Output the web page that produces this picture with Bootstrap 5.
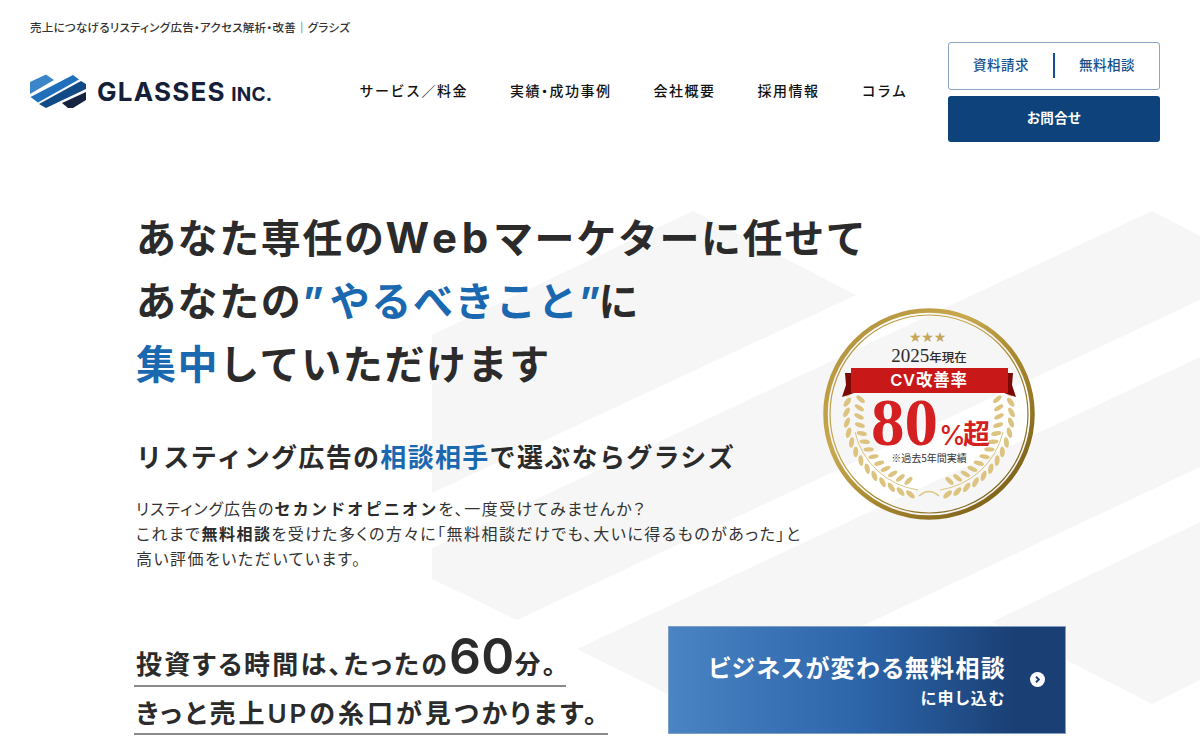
<!DOCTYPE html>
<html lang="ja">
<head>
<meta charset="utf-8">
<title>グラシズ</title>
<link href="https://cdn.jsdelivr.net/npm/bootstrap@5.3.0/dist/css/bootstrap.min.css" rel="stylesheet">
<style>
html,body{height:100%;}
body{font-family:"Inter","Noto Sans CJK JP",sans-serif;color:#2b2b2b;background:#fff;font-feature-settings:"palt";overflow:hidden;}
.page-wrap{height:750px;width:1200px;}
.bg-shape{left:0;top:0;width:1200px;height:750px;z-index:0;}
.site-head,.hero-main{z-index:1;}
.site-head{padding:0 40px 0 30px;height:142px;}
.tagline{margin:20px 0 0;font-size:11.5px;line-height:16px;font-weight:500;color:#333;white-space:nowrap;letter-spacing:.27px;}
.logo-row{margin-top:38px;height:34px;}
.logo-mark{width:56px;height:34px;flex:none;}
.logo-text{margin-left:11px;font-weight:700;font-size:26px;letter-spacing:1.25px;color:#14203a;line-height:34px;white-space:nowrap;padding-top:4px;}
.logo-text span{font-size:19px;letter-spacing:.2px;margin-left:-2px;}
.gnav{gap:42px;margin:0 40.5px 0 auto;list-style:none;padding:0;}
.gnav a{color:#111;text-decoration:none;font-size:14px;font-weight:500;letter-spacing:1.5px;white-space:nowrap;line-height:34px;display:block;font-feature-settings:normal;}
.mid-dot{font-feature-settings:"palt";}
.head-btns{width:212px;flex:none;margin-top:42px;gap:6px;}
.btn-pair{height:48px;border:1px solid #8aa4c6;border-radius:3px;background:#fff;padding-bottom:2px;}
.btn-pair a{color:#15508c;font-size:13.5px;font-weight:500;text-decoration:none;flex:1 1 0;text-align:center;letter-spacing:.5px;}
.btn-pair i{display:block;width:2px;height:25px;background:#15508c;flex:none;}
.btn-ask{height:46px;background:#0d437a;color:#fff;font-size:13.5px;font-weight:700;text-decoration:none;border-radius:3px;letter-spacing:.4px;padding-bottom:2px;}
.hero-main{padding-left:136px;}
.hero-title{margin:65px 0 0;font-size:40px;line-height:63px;font-weight:700;letter-spacing:1.6px;color:#2b2b2b;white-space:nowrap;font-feature-settings:normal;}
.latin-wide{font-size:42px;letter-spacing:4.8px;line-height:0;}
.quote-mark{letter-spacing:6px;}
.quote-mark.end{letter-spacing:-2px;}
.hl{color:#1a68b0;}
.hero-sub{margin:42px 0 0;font-size:26px;line-height:40px;font-weight:700;letter-spacing:1.32px;white-space:nowrap;font-feature-settings:normal;}
.hero-text{margin:19px 0 0;font-size:16px;line-height:25px;letter-spacing:1.5px;color:#333;white-space:nowrap;}
.hero-text b{font-weight:700;color:#2b2b2b;}
.hero-text .tight{letter-spacing:1px;}
.hero-text b.loose{font-feature-settings:normal;letter-spacing:2.2px;}
.cta-row{margin-top:54px;}
.lead-col{width:534px;margin-left:-2px;flex:none;}
.lead-line{width:fit-content;padding:0 8px 0 2px;border-bottom:2px solid #8a8a8a;font-size:26px;font-weight:600;letter-spacing:3px;white-space:nowrap;height:48px;line-height:54px;}
.lead-line.first{height:61px;line-height:78px;letter-spacing:2.2px;}
.lead-line b{font-size:50px;font-weight:600;line-height:1;letter-spacing:.2px;}
.cta-box{width:398px;height:108px;background:linear-gradient(90deg,#4a84c4 0%,#2c64a8 50%,#1a3f74 88%);color:#fff;text-decoration:none;padding:2px 59px 0 0;border:1px solid #7f9fc6;}
.cta-l1{font-size:24px;line-height:32px;font-weight:700;letter-spacing:1.3px;white-space:nowrap;}
.cta-l2{font-size:16px;line-height:24px;font-weight:700;letter-spacing:1.6px;margin-top:1px;}
.cta-arrow{right:20px;top:45px;width:15px;height:15px;}
.award{left:822px;top:307px;width:214px;height:214px;z-index:2;}
</style>
</head>
<body>
<div class="page-wrap position-relative overflow-hidden">
  <svg class="bg-shape position-absolute" viewBox="0 0 1200 750" aria-hidden="true">
    <g fill="#f6f6f6">
      <polygon points="432,335 693,211 856,295 432,493"/>
      <polygon points="432,548 1152,211 1200,236 1200,300 517,620 432,579"/>
      <polygon points="577,649 1200,357 1200,467 692,706"/>
      <polygon points="992,622 1200,522 1200,680 1152,704"/>
    </g>
  </svg>

  <header class="site-head d-flex position-relative">
    <div class="flex-grow-1">
      <p class="tagline">売上につなげるリスティング広告・アクセス解析・改善｜グラシズ</p>
      <div class="logo-row d-flex align-items-center">
        <svg class="logo-mark" viewBox="30 74 56 34" aria-hidden="true">
          <polygon fill="#3c85c8" points="30,82 46,74.5 54,80 30,94"/>
          <polygon fill="#1f6fbb" points="30.5,97 73,75 79,79.5 38,102.5"/>
          <polygon fill="#124a87" points="39,104 81,81 86,84 86,89 46,108"/>
          <polygon fill="#14233f" points="62,103 86,92 86,100 73,108 68,108"/>
        </svg>
        <div class="logo-text">GLASSES <span>INC.</span></div>
        <ul class="gnav d-flex">
          <li><a href="#">サービス／料金</a></li>
          <li><a href="#">実績<span class="mid-dot">・</span>成功事例</a></li>
          <li><a href="#">会社概要</a></li>
          <li><a href="#">採用情報</a></li>
          <li><a href="#">コラム</a></li>
        </ul>
      </div>
    </div>
    <div class="head-btns d-flex flex-column">
      <div class="btn-pair d-flex align-items-center">
        <a href="#">資料請求</a><i></i><a href="#">無料相談</a>
      </div>
      <a class="btn-ask d-flex align-items-center justify-content-center" href="#">お問合せ</a>
    </div>
  </header>

  <main class="hero-main position-relative">
    <h1 class="hero-title">あなた専任の<span class="latin-wide">Web</span>マーケターに任せて<br>あなたの<span class="hl"><span class="quote-mark">”</span>やるべきこと<span class="quote-mark end">”</span></span>に<br><span class="hl">集中</span>していただけます</h1>
    <h2 class="hero-sub">リスティング広告の<span class="hl">相談相手</span>で選ぶならグラシズ</h2>
    <p class="hero-text"><span class="tight">リスティング広告の</span><b class="loose">セカンドオピニオン</b>を、一度受けてみませんか？<br>これまで<b>無料相談</b>を受けた多くの方々に「無料相談だけでも、大いに得るものがあった」と<br>高い評価をいただいています。</p>
    <div class="cta-row d-flex">
      <div class="lead-col">
        <div class="lead-line first">投資する時間は、たったの<b>60</b>分。</div>
        <div class="lead-line">きっと売上UPの糸口が見つかります。</div>
      </div>
      <a class="cta-box position-relative d-flex flex-column justify-content-center align-items-end" href="#">
        <span class="cta-l1">ビジネスが変わる無料相談</span>
        <span class="cta-l2">に申し込む</span>
        <svg class="cta-arrow position-absolute" viewBox="0 0 15 15" aria-hidden="true">
          <circle cx="7.5" cy="7.5" r="7.5" fill="#fff"/>
          <path d="M6 4.6 8.8 7.5 6 10.4" fill="none" stroke="#1a3f74" stroke-width="2"/>
        </svg>
      </a>
    </div>
  </main>

  <svg class="award position-absolute" viewBox="822 307 214 214" role="img" aria-label="2025年現在 CV改善率 80%超">
    <defs>
      <linearGradient id="gold" x1="0" y1="0" x2="1" y2="1">
        <stop offset="0" stop-color="#a98a35"/>
        <stop offset=".35" stop-color="#c9a94f"/>
        <stop offset=".6" stop-color="#a5852c"/>
        <stop offset="1" stop-color="#6f5414"/>
      </linearGradient>
    </defs>
    <circle cx="929" cy="414" r="103.5" fill="none" stroke="url(#gold)" stroke-width="4.5"/>
    <circle cx="929" cy="414" r="99" fill="none" stroke="url(#gold)" stroke-width="1.2"/>
    <g id="laurel" fill="#dcc380"></g>
    <path d="M919 496q10-9 20 0" fill="none" stroke="#dcc380" stroke-width="1.5"/>
    <text x="927.5" y="342" text-anchor="middle" font-size="14" letter-spacing="-.2" fill="#c5a65a" font-family="DejaVu Sans">★★★</text>
    <text x="929" y="362" text-anchor="middle" fill="#2b2b2b" font-family="Liberation Serif" font-size="19">2025<tspan font-size="12.5" font-family="Noto Sans CJK JP" font-weight="500">年現在</tspan></text>
    <polygon fill="#7d0808" points="845,373 856,373 857,392 842,397 846,385"/>
    <polygon fill="#7d0808" points="1013,373 1002,373 1001,392 1016,397 1012,385"/>
    <rect x="851" y="368" width="157" height="25" fill="#c91818"/>
    <text x="929" y="386" text-anchor="middle" fill="#fff" font-family="Inter,Noto Sans CJK JP" font-weight="600" font-size="16.5" letter-spacing=".8">CV改善率</text>
    <text x="871" y="445" fill="#d42020" font-family="Liberation Serif" font-weight="700" font-size="67">80</text>
    <text x="939" y="445" fill="#d42020" font-family="Inter" font-weight="500" font-size="27">%</text>
    <text x="963" y="444" fill="#d42020" font-family="Noto Sans CJK JP" font-weight="700" font-size="27">超</text>
    <text x="929" y="462" text-anchor="middle" fill="#333" font-family="Noto Sans CJK JP" font-size="10">※過去5年間実績</text>
  </svg>
</div>
<script>
(function(){
  var g=document.getElementById('laurel'),cx=929,cy=414,out='';
  function leaf(a,r,tilt,rx,ry){
    var t=a*Math.PI/180,x=cx+r*Math.sin(t),y=cy+r*Math.cos(t);
    return '<ellipse cx="'+x.toFixed(1)+'" cy="'+y.toFixed(1)+'" rx="'+rx+'" ry="'+ry+'" transform="rotate('+(tilt-a).toFixed(1)+' '+x.toFixed(1)+' '+y.toFixed(1)+')"/>';
  }
  [-1,1].forEach(function(s){
    for(var i=0;i<14;i++){
      var a=s*(13+i*7.1);
      out+=leaf(a,82.5,s*-28,5.4,2.5);
      if(i<13) out+=leaf(s*(17+i*7.1),70,s*62,5.2,2.2);
    }
  });
  out+='<path d="M918 490A76 76 0 0 1 855 432" fill="none" stroke="#dcc380" stroke-width="1"/><path d="M940 490A76 76 0 0 0 1003 432" fill="none" stroke="#dcc380" stroke-width="1"/>';
  g.innerHTML=out;
})();
</script>
<script src="https://cdn.jsdelivr.net/npm/bootstrap@5.3.0/dist/js/bootstrap.bundle.min.js"></script>
</body>
</html>
